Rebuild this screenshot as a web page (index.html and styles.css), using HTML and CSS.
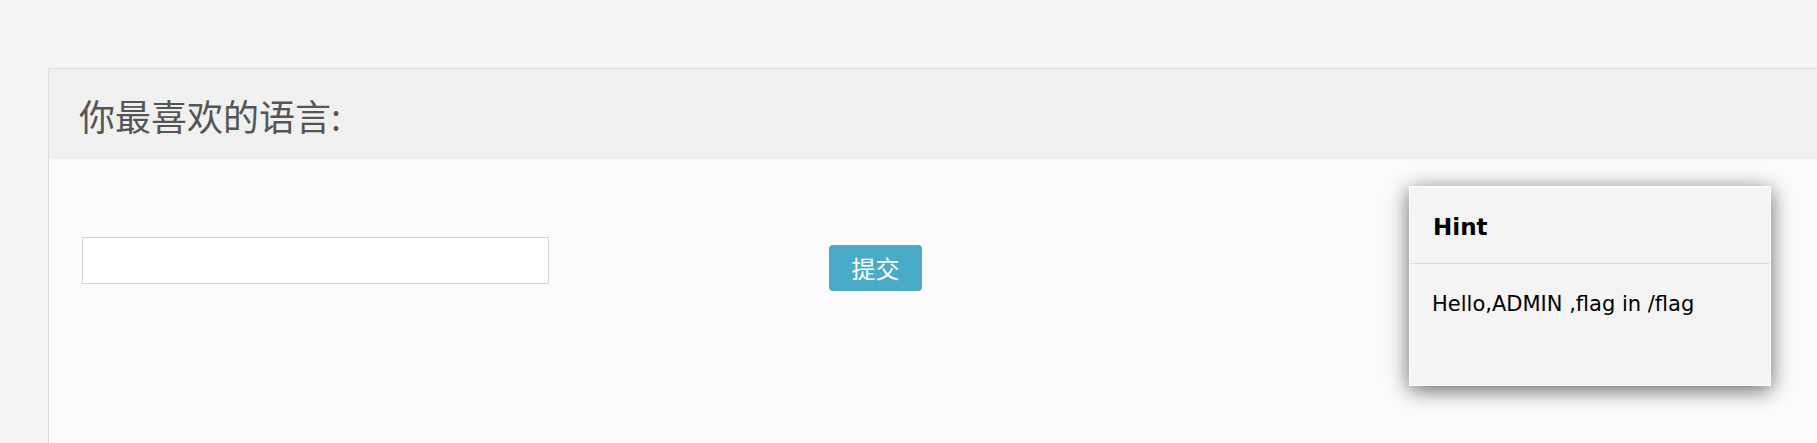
FILE: index.html
```html
<!DOCTYPE html>
<html lang="zh">
<head>
<meta charset="utf-8">
<title>Language</title>
<link rel="stylesheet" href="styles.css">
</head>
<body>
<div class="page">
  <div class="panel">
    <div class="panel-heading">
      <h2 class="panel-title">你最喜欢的语言:</h2>
    </div>
    <div class="panel-body">
      <form class="form-row">
        <input class="text-input" type="text">
        <button class="btn-submit" type="button">提交</button>
      </form>
    </div>
  </div>
  <div class="hint">
    <div class="hint-header">Hint</div>
    <div class="hint-body">Hello,ADMIN ,flag in /flag</div>
  </div>
</div>
</body>
</html>
```
FILE: styles.css
```css
html, body {
  margin: 0;
  padding: 0;
  height: 100%;
  overflow: hidden;
  background: #f5f5f7;
}

.page {
  position: relative;
  padding: 68px 0 0 48px;
  margin-right: -40px;
}

.panel {
  border: 1px solid #dcdcdc;
  border-right: none;
  background: #fbfbfb;
}

.panel-heading {
  background: #f0f0f0;
  height: 90px;
  display: flex;
  align-items: center;
  padding-left: 30px;
}

.panel-title {
  margin: 0;
  font-family: "Noto Sans CJK SC", "Noto Sans", sans-serif;
  font-weight: 400;
  font-size: 36px;
  color: #555;
  line-height: 1;
  padding-top: 2px;
}

.panel-body {
  min-height: 300px;
  padding: 78px 0 0 33px;
}

.form-row {
  display: flex;
  align-items: flex-start;
  gap: 280px;
  margin: 0;
}

.text-input {
  box-sizing: border-box;
  width: 467px;
  height: 47px;
  border: 1px solid #d2d2d2;
  background: #fff;
  margin: 0;
  padding: 0 8px;
  outline: none;
}

.btn-submit {
  margin-top: 8px;
  width: 93px;
  height: 46px;
  border: none;
  border-radius: 4px;
  background: #4aabc8;
  color: #fff;
  font-family: "Noto Sans CJK SC", "Noto Sans", sans-serif;
  font-size: 24px;
  line-height: 1;
  padding: 0;
}

.hint {
  position: absolute;
  left: 1409px;
  top: 186px;
  width: 362px;
  height: 200px;
  box-sizing: border-box;
  border: 1px solid #fff;
  background: #f4f4f4;
  box-shadow: 0 4px 20px rgba(0, 0, 0, 0.6);
  display: flex;
  flex-direction: column;
  font-family: "DejaVu Sans", Verdana, sans-serif;
  color: #000;
}

.hint-header {
  padding: 27px 23px 22px;
  line-height: 27px;
  font-size: 23px;
  font-weight: 700;
  border-bottom: 1px solid #dcdcdc;
}

.hint-body {
  padding: 28px 22px;
  font-size: 21px;
}
```
